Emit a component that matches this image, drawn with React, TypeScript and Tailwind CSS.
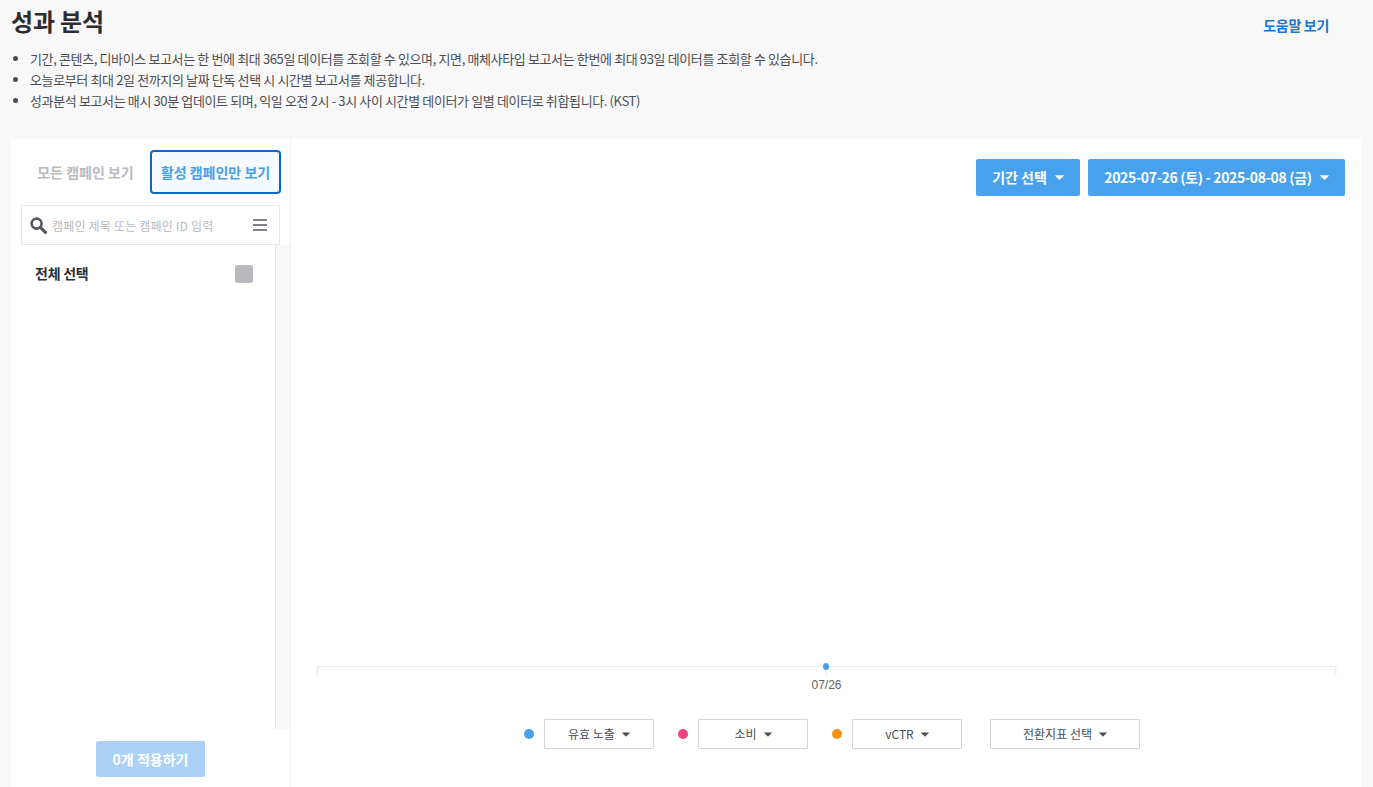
import React from "react";

function Caret({ className }: { className: string }) {
  return (
    <svg className={className} width="9" height="5" viewBox="0 0 9 5" aria-hidden="true">
      <path d="M0.3 0.2 H8.7 Q9 0.5 8.7 0.9 L5 4.6 Q4.5 5 4 4.6 L0.3 0.9 Q0 0.5 0.3 0.2 Z" fill="currentColor" />
    </svg>
  );
}

function MetricSelect({ dot, label, w }: { dot?: string; label: string; w: string }) {
  return (
    <div className="flex items-center">
      {dot && <span className={`w-[10px] h-[10px] rounded-full mr-[10px] ${dot}`} />}
      <div className={`h-[30px] ${w} border border-[#d4d5da] rounded-[1px] bg-white flex items-center justify-center gap-[7px] text-[12px] text-[#4a4d55]`}>
        <span>{label}</span>
        <Caret className="text-[#4a4d55] w-[8px] h-[5px] mt-[1px]" />
      </div>
    </div>
  );
}

export default function App() {
  return (
    <div className="h-[787px] w-[1373px] overflow-hidden bg-[#f8f8f8] text-[#333] flex flex-col" style={{ fontFamily: '"Noto Sans CJK KR", "Noto Sans", sans-serif' }}>
      <header className="h-[139px] shrink-0 pl-[11px] pr-[44px]">
        <div className="flex items-start justify-between">
          <h1 className="text-[24px] leading-[36px] font-bold text-[#2b2d31] tracking-[-0.2px] mt-[3px]">성과 분석</h1>
          <a className="text-[14px] leading-[20px] font-bold text-[#1a73d0] tracking-[-0.3px] mt-[15px]">도움말 보기</a>
        </div>
        <ul className="list-disc pl-[19px] mt-[9px] text-[13px] leading-[21px] text-[#4b4d53] tracking-[-0.37px]">
          <li>기간, 콘텐츠, 디바이스 보고서는 한 번에 최대 365일 데이터를 조회할 수 있으며, 지면, 매체사타입 보고서는 한번에 최대 93일 데이터를 조회할 수 있습니다.</li>
          <li>오늘로부터 최대 2일 전까지의 날짜 단독 선택 시 시간별 보고서를 제공합니다.</li>
          <li>성과분석 보고서는 매시 30분 업데이트 되며, 익일 오전 2시 - 3시 사이 시간별 데이터가 일별 데이터로 취합됩니다. (KST)</li>
        </ul>
      </header>

      <main className="flex-1 ml-[11px] mr-[12px] bg-white flex min-h-0">
        <aside className="w-[280px] shrink-0 border-r border-[#f1f1f2] flex flex-col">
          <div className="flex items-center pt-[11px] pl-[10px] pr-[9px] h-[55px] shrink-0">
            <button className="w-[129px] h-[44px] text-[14px] font-bold text-[#b9babe]">모든 캠페인 보기</button>
            <button className="w-[131px] h-[44px] rounded-[4px] border-2 border-[#0a66cc] bg-[#f5faff] text-[14px] font-bold text-[#469fea]">활성 캠페인만 보기</button>
          </div>
          <div className="mx-[10px] mt-[11px] w-[259px] h-[40px] shrink-0 border border-[#e6e7ea] rounded-[1px] flex items-center pl-[8px] pr-[12px]">
            <svg width="17" height="17" viewBox="0 0 17 17" fill="none" aria-hidden="true">
              <circle cx="6.6" cy="6.6" r="5" stroke="#55585f" strokeWidth="2.6" />
              <path d="M10.8 10.8 L15.4 15.4" stroke="#55585f" strokeWidth="3.2" strokeLinecap="round" />
            </svg>
            <span className="ml-[5px] flex-1 text-[12px] text-[#b9babe] tracking-[0.2px] mt-[1px]">캠페인 제목 또는 캠페인 ID 입력</span>
            <svg width="14" height="12" viewBox="0 0 14 12" aria-hidden="true">
              <path d="M0 1 H14 M0 6 H14 M0 11 H14" stroke="#55585f" strokeWidth="1.6" />
            </svg>
          </div>
          <div className="flex flex-1 min-h-0">
            <div className="flex-1 flex items-start justify-between pl-[24px] pr-[22px] pt-[19px]">
              <span className="text-[14px] leading-[18px] font-bold text-[#2b2d31] tracking-[-0.25px]">전체 선택</span>
              <span className="w-[18px] h-[18px] rounded-[3px] bg-[#b9babf] mt-[1px]" />
            </div>
            <div className="w-[15px] bg-[#f8f8f8] border-l border-[#e6e7ea]" />
          </div>
          <div className="h-[58px] shrink-0 flex justify-center pt-[12px]">
            <button className="w-[109px] h-[36px] rounded-[2px] bg-[#abd2f6] text-white text-[14px] font-bold">0개 적용하기</button>
          </div>
        </aside>

        <section className="flex-1 flex flex-col min-w-0">
          <div className="flex justify-end gap-[8px] pt-[20px] pr-[16px] shrink-0">
            <button className="w-[104px] h-[37px] rounded-[2px] bg-[#47a1ec] text-white text-[14px] font-bold flex items-center justify-center gap-[8px]">
              <span>기간 선택</span>
              <Caret className="text-white" />
            </button>
            <button className="w-[257px] h-[37px] rounded-[2px] bg-[#47a1ec] text-white text-[14px] font-bold tracking-[-0.33px] flex items-center justify-center gap-[8px]">
              <span>2025-07-26 (토) - 2025-08-08 (금)</span>
              <Caret className="text-white" />
            </button>
          </div>
          <div className="flex-1 min-h-0 relative">
            <svg width="1070" height="523" viewBox="0 0 1070 523" className="block" aria-hidden="true">
              <path d="M26 470.5 H1045" fill="none" stroke="#e6e9ef" strokeWidth="1" />
              <path d="M26.5 471 V479 M1044.5 471 V479" stroke="#eceef2" strokeWidth="2" />
              <path d="M535 470 V479" stroke="#eceef2" strokeWidth="1.5" />
              <ellipse cx="535" cy="470.5" rx="3" ry="3.5" fill="#47a1ec" />
              <text x="535.5" y="492.5" textAnchor="middle" fontSize="12" fill="#5f6166" style={{ fontFamily: '"Liberation Sans", Arial, sans-serif' }}>07/26</text>
            </svg>
          </div>
          <div className="h-[68px] shrink-0 flex items-start pl-[233px]">
            <MetricSelect dot="bg-[#47a1ec]" label="유효 노출" w="w-[110px]" />
            <div className="ml-[24px]"><MetricSelect dot="bg-[#f0457a]" label="소비" w="w-[110px]" /></div>
            <div className="ml-[24px]"><MetricSelect dot="bg-[#f89406]" label="vCTR" w="w-[110px]" /></div>
            <div className="ml-[28px]"><MetricSelect label="전환지표 선택" w="w-[150px]" /></div>
          </div>
        </section>
      </main>
    </div>
  );
}
